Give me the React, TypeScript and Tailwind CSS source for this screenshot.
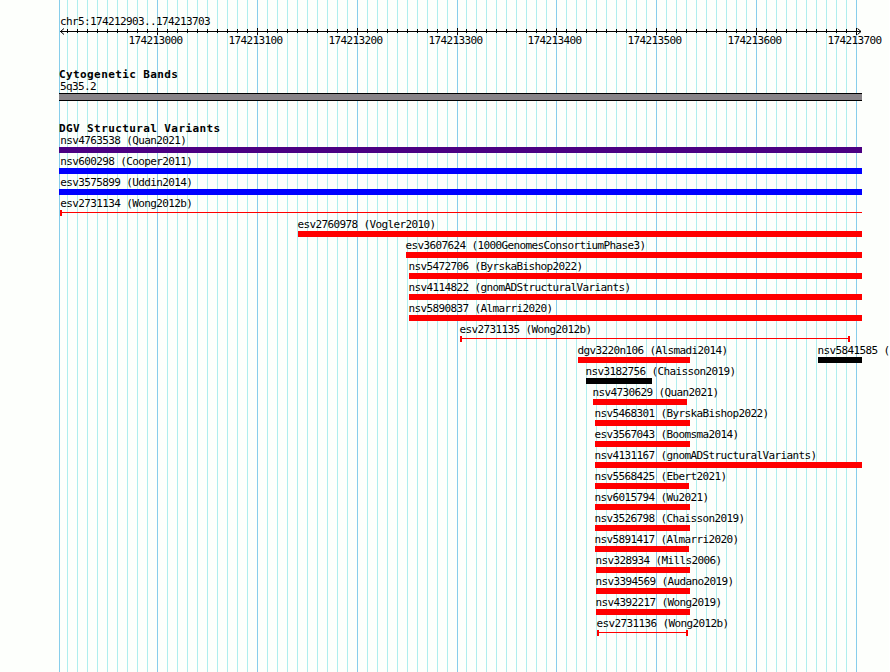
type Feature = {
  id: string
  study: string
  start: number
  end: number
  color: string
  span?: boolean
}

const VIEW_LEFT = 59
const VIEW_RIGHT = 862

const RED = 'bg-[#ff0000]'
const BLUE = 'bg-[#0000ff]'
const INDIGO = 'bg-[#4b0082]'
const BLACK = 'bg-black'

const rows: Feature[][] = [
  [{ id: 'nsv4763538', study: 'Quan2021', start: 59, end: 862, color: INDIGO }],
  [{ id: 'nsv600298', study: 'Cooper2011', start: 59, end: 862, color: BLUE }],
  [{ id: 'esv3575899', study: 'Uddin2014', start: 59, end: 862, color: BLUE }],
  [{ id: 'esv2731134', study: 'Wong2012b', start: 60, end: 862, color: RED, span: true }],
  [{ id: 'esv2760978', study: 'Vogler2010', start: 298, end: 862, color: RED }],
  [{ id: 'esv3607624', study: '1000GenomesConsortiumPhase3', start: 406, end: 862, color: RED }],
  [{ id: 'nsv5472706', study: 'ByrskaBishop2022', start: 409, end: 862, color: RED }],
  [{ id: 'nsv4114822', study: 'gnomADStructuralVariants', start: 409, end: 862, color: RED }],
  [{ id: 'nsv5890837', study: 'Almarri2020', start: 409, end: 862, color: RED }],
  [{ id: 'esv2731135', study: 'Wong2012b', start: 460, end: 850, color: RED, span: true }],
  [
    { id: 'dgv3220n106', study: 'Alsmadi2014', start: 578, end: 690, color: RED },
    { id: 'nsv5841585', study: '', start: 818, end: 862, color: BLACK },
  ],
  [{ id: 'nsv3182756', study: 'Chaisson2019', start: 586, end: 652, color: BLACK }],
  [{ id: 'nsv4730629', study: 'Quan2021', start: 593, end: 687, color: RED }],
  [{ id: 'nsv5468301', study: 'ByrskaBishop2022', start: 595, end: 690, color: RED }],
  [{ id: 'esv3567043', study: 'Boomsma2014', start: 595, end: 690, color: RED }],
  [{ id: 'nsv4131167', study: 'gnomADStructuralVariants', start: 595, end: 862, color: RED }],
  [{ id: 'nsv5568425', study: 'Ebert2021', start: 595, end: 689, color: RED }],
  [{ id: 'nsv6015794', study: 'Wu2021', start: 595, end: 690, color: RED }],
  [{ id: 'nsv3526798', study: 'Chaisson2019', start: 595, end: 690, color: RED }],
  [{ id: 'nsv5891417', study: 'Almarri2020', start: 595, end: 689, color: RED }],
  [{ id: 'nsv328934', study: 'Mills2006', start: 596, end: 690, color: RED }],
  [{ id: 'nsv3394569', study: 'Audano2019', start: 596, end: 690, color: RED }],
  [{ id: 'nsv4392217', study: 'Wong2019', start: 596, end: 690, color: RED }],
  [{ id: 'esv2731136', study: 'Wong2012b', start: 597, end: 688, color: RED, span: true }],
]

// one tick every 10 bp, a major one every 100 bp
const ticks = Array.from({ length: 80 }, (_, i) => ({
  x: 67 + i * 10 - (i >= 40 ? 1 : 0),
  major: i % 10 === 9,
  bp: 174212910 + i * 10,
}))

function GridLines() {
  return (
    <svg className="absolute inset-0" width="889" height="672" shapeRendering="crispEdges" aria-hidden>
      <rect x={VIEW_LEFT} y="0" width="1" height="672" fill="#87ceeb" />
      {ticks.map((t) => (
        <rect key={t.bp} x={t.x} y="0" width="1" height="672" fill={t.major ? '#87ceeb' : '#afeeee'} />
      ))}
    </svg>
  )
}

function Ruler() {
  return (
    <div className="relative h-[22px]">
      <svg className="block" width="889" height="9" shapeRendering="crispEdges" aria-hidden>
        <rect x="60" y="4" width="801" height="1" />
        {ticks.map((t) => (
          <rect key={t.bp} x={t.x} y={t.major ? 1 : 2} width="1" height={t.major ? 7 : 4} />
        ))}
        <path d="M64 1.5l-3.5 3l3.5 3M857.5 1.5l3.5 3l-3.5 3" fill="none" stroke="#000" shapeRendering="auto" />
      </svg>
      {ticks
        .filter((t) => t.major)
        .map((t) => (
          <span key={t.bp} className="absolute top-[7px]" style={{ left: t.x - 28.5 }}>
            {t.bp}
          </span>
        ))}
    </div>
  )
}

function Glyph({ feature }: { feature: Feature }) {
  if (!feature.span) return <div className={`h-1.5 ${feature.color}`} />
  const openRight = feature.end === VIEW_RIGHT
  return (
    <div className="flex h-1.5">
      <div className={`h-1.5 w-0.5 ${feature.color}`} />
      <div className={`mt-0.5 h-px flex-1 ${feature.color}`} />
      {!openRight && <div className={`h-1.5 w-0.5 ${feature.color}`} />}
    </div>
  )
}

function FeatureRow({ features }: { features: Feature[] }) {
  return (
    <div className="flex h-[21px]">
      {features.map((f, i) => {
        const prev = i === 0 ? 0 : features[i - 1].end
        const labelX = Math.max(f.start - 0.6, 60.2)
        return (
          <div key={f.id} className="shrink-0" style={{ marginLeft: f.start - prev, width: f.end - f.start }}>
            <div className="h-[13px]" style={{ marginLeft: labelX - f.start }}>
              {f.id} ({f.study && `${f.study})`}
            </div>
            <Glyph feature={f} />
          </div>
        )
      })}
    </div>
  )
}

function TrackTitle({ children }: { children: string }) {
  return <h2 className="h-3 pl-[59px] font-bold tracking-[0.4px]">{children}</h2>
}

export default function App() {
  return (
    <div className="h-[672px] w-[890px] bg-white">
      <main className="relative h-[672px] w-[889px] overflow-hidden bg-[#fdfffc] font-['DejaVu_Sans_Mono',monospace] text-[11px] leading-[13px] tracking-[-0.622px] whitespace-nowrap text-black">
        <GridLines />
        <div className="relative pt-[15px]">
          <div className="h-3 pl-[60px]">chr5:174212903..174213703</div>
          <Ruler />

          <section className="pt-[19px]">
            <TrackTitle>Cytogenetic Bands</TrackTitle>
            <div className="h-[13px] pl-[60px]">5q35.2</div>
            <div className="ml-[59px] h-2 w-[803px] border-y border-black bg-[#888488]" />
          </section>

          <section className="pt-[21px]">
            <TrackTitle>DGV Structural Variants</TrackTitle>
            {rows.map((features) => (
              <FeatureRow key={features[0].id} features={features} />
            ))}
          </section>
        </div>
      </main>
    </div>
  )
}
